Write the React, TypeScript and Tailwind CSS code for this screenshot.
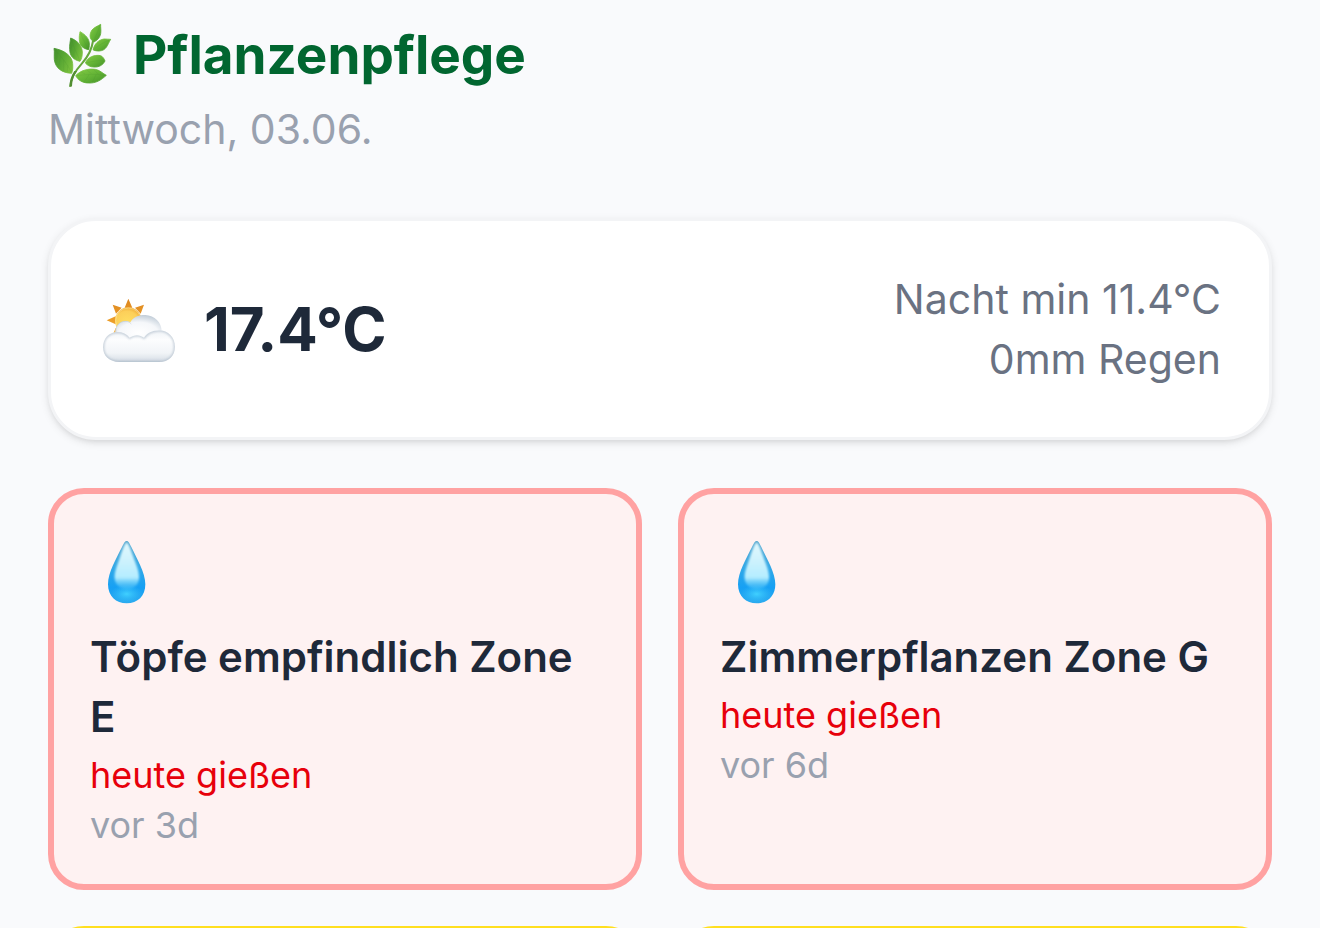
import React from "react";

function LeafIcon() {
  return (
    <svg viewBox="40 40 180 198" className="mt-0.5 ml-[5px] h-[66px] w-[60px]" aria-hidden="true">
      <defs>
        <linearGradient id="leafLight" x1="0" y1="0" x2="1" y2="1">
          <stop offset="0" stopColor="#85cb45" />
          <stop offset="0.5" stopColor="#64b436" />
          <stop offset="1" stopColor="#459329" />
        </linearGradient>
        <linearGradient id="leafDark" x1="0" y1="0" x2="1" y2="0.6">
          <stop offset="0" stopColor="#438f2c" />
          <stop offset="0.5" stopColor="#58a633" />
          <stop offset="1" stopColor="#78bf3d" />
        </linearGradient>
      </defs>
      <path d="M92 231 C93 204 107 183 127 161 C145 141 156 123 160 94" fill="none" stroke="#65a63c" strokeWidth="6" />
      <path d="M89 231 L97 230 C97 211 103 197 112 184 L104 184 C94 200 90 213 89 231Z" fill="#528e32" />
      <g strokeWidth="2.5" strokeLinejoin="round">
        <path d="M43 116 C74 122 97 138 99 162 C100 174 99 183 96 191 C67 190 47 175 44 150 C43 138 45 128 43 116Z" fill="url(#leafDark)" stroke="url(#leafDark)" />
        <path d="M93 85 C113 93 127 107 128 127 C128 139 126 148 121 155 C102 151 90 139 90 119 C89 106 92 96 93 85Z" fill="url(#leafDark)" stroke="url(#leafDark)" />
        <path d="M121 66 C138 75 149 88 149 103 C149 111 148 117 147 120 C129 117 119 106 119 90 C118 80 120 73 121 66Z" fill="url(#leafLight)" stroke="url(#leafLight)" />
        <path d="M183 44 C182 61 191 82 163 97 C148 88 149 73 157 61 C163 53 174 50 183 44Z" fill="url(#leafLight)" stroke="url(#leafLight)" />
        <path d="M213 89 C203 105 201 123 178 124 C168 124 162 122 160 120 C165 102 176 91 193 88 C201 87 207 90 213 89Z" fill="url(#leafLight)" stroke="url(#leafLight)" />
        <path d="M137 160 C144 143 163 134 183 138 C189 140 194 148 196 154 C189 167 177 173 163 172 C151 172 143 167 137 160Z" fill="url(#leafLight)" stroke="url(#leafLight)" />
        <path d="M108 198 C123 182 145 176 167 179 C182 182 190 192 200 197 C184 211 170 221 147 220 C126 220 114 209 108 198Z" fill="url(#leafLight)" stroke="url(#leafLight)" />
      </g>
      <g fill="none" stroke="#367d25" strokeWidth="1.5" opacity="0.22">
        <path d="M47 121 C66 144 83 161 95 188M95 91 C104 116 113 134 120 152M123 70 C129 90 139 104 146 118M181 47 C174 67 168 79 163 94M210 90 C190 99 175 109 162 119M194 154 C174 151 157 155 140 160M198 197 C170 192 140 194 111 198" />
        <path d="M53 130l-2 19M62 140l-4 27M72 151l0 33M84 166l-1 22M97 105l-4 18M104 120l-2 22M124 187l12 6M142 181l14 12M164 181l12 13M134 216l15-22M158 218l12-24" />
      </g>
    </svg>
  );
}

function WeatherIcon() {
  return (
    <svg viewBox="36 39 222 195" className="mt-0.5 ml-[3px] h-[65px] w-[74px]" aria-hidden="true">
      <defs>
        <radialGradient id="sun" cx="0.45" cy="0.6" r="0.65">
          <stop offset="0" stopColor="#ffdf62" />
          <stop offset="0.7" stopColor="#fccf5a" />
          <stop offset="1" stopColor="#eda12b" />
        </radialGradient>
        <linearGradient id="ray" x1="0" y1="0" x2="0" y2="1">
          <stop offset="0" stopColor="#dd861e" />
          <stop offset="1" stopColor="#f6ae31" />
        </linearGradient>
        <radialGradient id="puff" cx="0.5" cy="0.7" r="0.7">
          <stop offset="0" stopColor="#ffffff" />
          <stop offset="0.6" stopColor="#f5f7fa" />
          <stop offset="1" stopColor="#c3ced9" />
        </radialGradient>
        <linearGradient id="cloudBase" x1="0" y1="0" x2="0" y2="1">
          <stop offset="0" stopColor="#eef2f6" />
          <stop offset="0.3" stopColor="#fcfdfe" />
          <stop offset="0.7" stopColor="#f1f4f7" />
          <stop offset="0.92" stopColor="#dae1e8" />
          <stop offset="1" stopColor="#bcc8d3" />
        </linearGradient>
        <filter id="cloudEdge" x="-5%" y="-5%" width="110%" height="110%">
          <feGaussianBlur stdDeviation="2.5" />
        </filter>
        <clipPath id="cloudShape">
          <path d="M82 141 C57 141 39 160 39 187 C39 213 58 231 88 231 L207 231 C237 231 255 212 255 185 C255 157 234 136 208 136 C186 136 171 145 162 158 C150 148 132 148 119 158 C111 147 98 141 82 141Z" />
        </clipPath>
      </defs>
      <path d="M115 41 L127 68 L104 68Z M68 59 L95 68 L78 86Z M162 59 L152 86 L135 68Z M50 106 L77 94 L77 118Z M68 151 L77 129 L91 143Z" fill="url(#ray)" />
      <circle cx="115" cy="107" r="40" fill="url(#sun)" />
      <circle cx="115" cy="107" r="38" fill="none" stroke="#fff0b0" strokeWidth="2" opacity="0.7" />
      <path d="M77 150 C72 127 87 107 108 108 C113 108 118 110 121 112 C130 96 147 89 166 90 C194 91 215 112 215 139 L214 165 L79 167Z" fill="url(#puff)" />
      <path d="M78 142 C76 121 90 108 108 109 C113 109 118 111 124 117" fill="none" stroke="#b7c4d2" strokeWidth="2.5" opacity="0.6" />
      <g clipPath="url(#cloudShape)">
        <rect x="36" y="134" width="222" height="100" fill="url(#cloudBase)" />
        <path d="M82 141 C57 141 39 160 39 187 C39 213 58 231 88 231 L207 231 C237 231 255 212 255 185 C255 157 234 136 208 136 C186 136 171 145 162 158 C150 148 132 148 119 158 C111 147 98 141 82 141Z" fill="none" stroke="#a5b4c3" strokeWidth="7" opacity="0.65" filter="url(#cloudEdge)" />
      </g>
    </svg>
  );
}

function DropIcon() {
  return (
    <svg viewBox="51 30 117 192" className="mt-[10px] mb-[23px] ml-[17px] h-16 w-[39px]" aria-hidden="true">
      <defs>
        <linearGradient id="water" x1="0" y1="0" x2="0" y2="1">
          <stop offset="0" stopColor="#55a6cd" />
          <stop offset="0.4" stopColor="#35a9e6" />
          <stop offset="0.75" stopColor="#16a0f4" />
          <stop offset="1" stopColor="#2ba9ee" />
        </linearGradient>
        <linearGradient id="shine" x1="0" y1="0" x2="0" y2="1">
          <stop offset="0" stopColor="#e2f8fd" />
          <stop offset="0.4" stopColor="#cdf2fd" />
          <stop offset="0.75" stopColor="#b4edff" />
          <stop offset="1" stopColor="#58ccfb" stopOpacity="0.25" />
        </linearGradient>
        <radialGradient id="glow" cx="0.5" cy="0.5" r="0.5">
          <stop offset="0" stopColor="#40d0ff" />
          <stop offset="1" stopColor="#32bcf8" stopOpacity="0" />
        </radialGradient>
        <filter id="soften" x="-20%" y="-20%" width="140%" height="140%">
          <feGaussianBlur stdDeviation="3.5" />
        </filter>
      </defs>
      <path d="M110 33 C104 33 101 41 96 51 C79 85 54 127 54 163 C54 199 78 220 110 220 C143 220 166 198 166 163 C166 127 140 85 124 51 C119 41 116 33 110 33Z" fill="url(#water)" />
      <ellipse cx="110" cy="192" rx="48" ry="28" fill="url(#glow)" />
      <path d="M110 37 C102 44 98 59 92 75 C84 102 72 125 74 146 C77 166 93 177 111 177 C129 177 145 166 147 146 C149 124 137 102 128 75 C122 59 118 44 110 37Z" fill="url(#shine)" filter="url(#soften)" />
    </svg>
  );
}

type Plant = { name: string; status: string; last: string };

const plants: Plant[] = [
  { name: "Töpfe empfindlich Zone E", status: "heute gießen", last: "vor 3d" },
  { name: "Zimmerpflanzen Zone G", status: "heute gießen", last: "vor 6d" },
];

function PlantCard({ plant }: { plant: Plant }) {
  return (
    <article className="rounded-[36px] border-6 border-[#ffa2a2] bg-[#fef2f2] px-9 pt-9 pb-[34px]">
      <DropIcon />
      <h2 className="text-[42px] leading-[60px] font-semibold text-[#1e2939]">{plant.name}</h2>
      <p className="mt-0.5 text-[36px] leading-[52px] text-[#e7000b]">{plant.status}</p>
      <p className="text-[36px] leading-[49px] text-[#99a1af]">{plant.last}</p>
    </article>
  );
}

export default function App() {
  return (
    <main className="h-screen overflow-hidden bg-[#f9fafc] px-12 font-['Inter',sans-serif]">
      <header className="pt-[13px]">
        <h1 className="flex items-center gap-5 text-[53px] leading-[84px] font-bold text-[#016630]">
          <LeafIcon />
          Pflanzenpflege
        </h1>
        <p className="mt-0.5 text-[41px] leading-[60px] text-[#99a1af]">Mittwoch, 03.06.</p>
      </header>

      <section className="mt-[59px] flex items-center justify-between rounded-[48px] border-3 border-[#f3f4f6] bg-white p-12 shadow-[0_3px_9px_rgba(0,0,0,0.1),0_3px_6px_-3px_rgba(0,0,0,0.1)]">
        <div className="flex items-center gap-7">
          <WeatherIcon />
          <p className="text-[60px] leading-[84px] font-bold text-[#1e2939]">17.4°C</p>
        </div>
        <div className="text-right text-[41px] leading-[60px] text-[#6a7282]">
          <p>Nacht min 11.4°C</p>
          <p>0mm Regen</p>
        </div>
      </section>

      <section className="mt-12 grid grid-cols-2 gap-9">
        {plants.map((plant) => (
          <PlantCard key={plant.name} plant={plant} />
        ))}
        <div className="h-60 rounded-[36px] border-6 border-[#ffdf20] bg-[#fefce8]" />
        <div className="h-60 rounded-[36px] border-6 border-[#ffdf20] bg-[#fefce8]" />
      </section>
    </main>
  );
}
